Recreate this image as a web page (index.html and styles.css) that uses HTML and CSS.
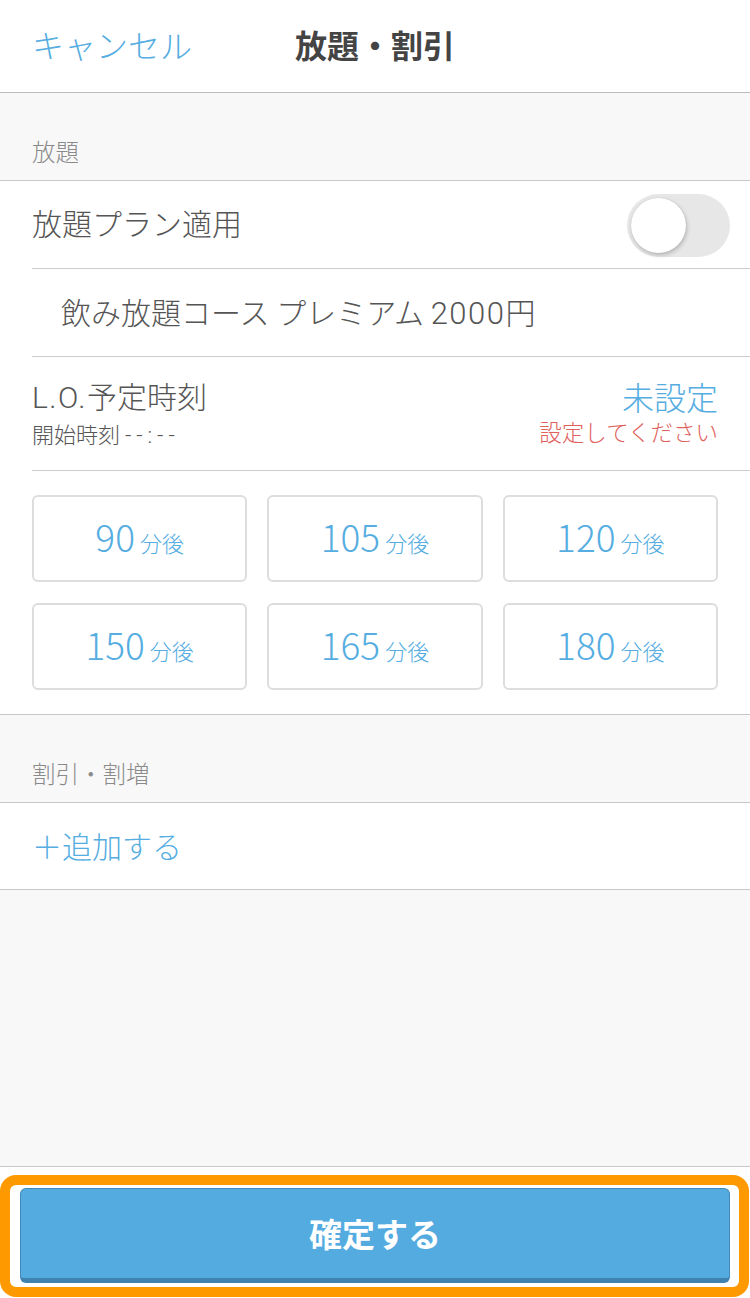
FILE: index.html
```html
<!DOCTYPE html>
<html lang="ja">
<head>
<meta charset="utf-8">
<title>放題・割引</title>
<link rel="stylesheet" href="styles.css">
</head>
<body>
<div class="page">
  <header class="header">
    <span class="cancel">キャンセル</span>
    <h1 class="title">放題・割引</h1>
  </header>

  <div class="section-head"><span>放題</span></div>
  <div class="group">
    <div class="row row-toggle">
      <span class="row-text">放題プラン適用</span>
      <span class="toggle"><span class="knob"></span></span>
    </div>
    <div class="row row-plan">
      <span class="row-text">飲み放題コース プレミアム <span class="latin price">2000</span>円</span>
    </div>
    <div class="row row-lo">
      <div class="lo-left">
        <span class="lo-title"><span class="latin lo-abbr">L.O.</span>予定時刻</span>
        <span class="lo-sub">開始時刻 <span class="latin dashes">--:--</span></span>
      </div>
      <div class="lo-right">
        <span class="lo-value">未設定</span>
        <span class="lo-warn">設定してください</span>
      </div>
    </div>
    <div class="btn-grid">
      <button class="min-btn"><span class="num">90</span><span class="unit">分後</span></button>
      <button class="min-btn"><span class="num">105</span><span class="unit">分後</span></button>
      <button class="min-btn"><span class="num">120</span><span class="unit">分後</span></button>
      <button class="min-btn"><span class="num">150</span><span class="unit">分後</span></button>
      <button class="min-btn"><span class="num">165</span><span class="unit">分後</span></button>
      <button class="min-btn"><span class="num">180</span><span class="unit">分後</span></button>
    </div>
  </div>

  <div class="section-head"><span>割引・割増</span></div>
  <div class="group">
    <div class="row row-add">
      <span class="add">＋追加する</span>
    </div>
  </div>

  <div class="filler"></div>

  <footer class="footer">
    <div class="highlight">
      <button class="confirm">確定する</button>
    </div>
  </footer>
</div>
</body>
</html>
```

FILE: styles.css
```css
* { box-sizing: border-box; }

html, body {
  margin: 0;
  padding: 0;
  background: #ffffff;
}

body {
  font-family: "Noto Sans CJK JP", "Noto Sans", sans-serif;
  font-weight: 300;
  color: #555555;
}

.latin {
  font-family: Roboto, "Liberation Sans", "Noto Sans CJK JP", sans-serif;
  font-weight: 300;
}

.page {
  width: 750px;
  height: 1298px;
  display: flex;
  flex-direction: column;
  background: #f8f8f8;
}

.header {
  height: 93px;
  flex: none;
  background: #ffffff;
  border-bottom: 1px solid #bdbdbd;
  display: flex;
  align-items: center;
  position: relative;
  padding-left: 32px;
}

.cancel {
  font-size: 32px;
  color: #55ade1;
  line-height: 1;
  margin-top: -4px;
}

.title {
  position: absolute;
  left: 0;
  right: 0;
  top: 0;
  bottom: 0;
  margin: 0;
  display: flex;
  align-items: center;
  justify-content: center;
  font-size: 32px;
  font-weight: 700;
  color: #444444;
  pointer-events: none;
  padding-bottom: 4px;
}

.section-head {
  height: 87px;
  flex: none;
  display: flex;
  align-items: flex-end;
  padding: 0 0 17px 32px;
  font-size: 23.5px;
  line-height: 23px;
  color: #8a8a8a;
}

.group {
  flex: none;
  background: #ffffff;
  border-top: 1px solid #c8c8c8;
  border-bottom: 1px solid #c8c8c8;
}

.row {
  margin-left: 32px;
  border-bottom: 1px solid #cccccc;
  display: flex;
  align-items: center;
}

.row-text {
  font-size: 30px;
  line-height: 1;
  color: #555555;
}

.row-toggle {
  height: 88px;
  justify-content: space-between;
  padding: 0 20px 0 0;
}

.row-toggle .row-text {
  margin-top: -5px;
}

.toggle {
  width: 103px;
  height: 63px;
  border-radius: 32px;
  background: #e7e7e8;
  display: flex;
  align-items: center;
  padding-left: 4px;
  margin-top: 2px;
}

.knob {
  width: 55px;
  height: 55px;
  border-radius: 50%;
  background: #ffffff;
  box-shadow: 1px 2px 4px rgba(0, 0, 0, 0.22), 0 0 1px rgba(0, 0, 0, 0.15);
}

.row-plan {
  height: 88px;
  padding-left: 29px;
}

.price {
  font-size: 31px;
  letter-spacing: 1.5px;
}

.row-lo {
  height: 114px;
  justify-content: space-between;
  padding: 0 32px 0 0;
}

.lo-left, .lo-right {
  display: flex;
  flex-direction: column;
  gap: 5px;
}

.lo-right {
  align-items: flex-end;
  margin-top: -4px;
}

.lo-title {
  font-size: 30px;
  line-height: 34px;
  color: #555555;
}

.lo-abbr {
  letter-spacing: 1.5px;
}

.lo-sub {
  font-size: 22px;
  line-height: 26px;
  color: #555555;
}

.dashes {
  letter-spacing: 5px;
}

.lo-value {
  font-size: 32px;
  line-height: 34px;
  color: #55ade1;
}

.lo-warn {
  font-size: 22.5px;
  line-height: 26px;
  color: #e0605b;
}

.btn-grid {
  display: grid;
  grid-template-columns: repeat(3, 1fr);
  column-gap: 20px;
  row-gap: 21px;
  padding: 24px 32px 24px 32px;
}

.min-btn {
  height: 87px;
  border: 2px solid #dddddd;
  border-radius: 6px;
  background: #ffffff;
  display: flex;
  align-items: baseline;
  justify-content: center;
  padding: 0;
  padding-top: 21px;
  font-family: "Noto Sans CJK JP", "Noto Sans", sans-serif;
  font-weight: 300;
  color: #55ade1;
}

.num {
  font-size: 37px;
  line-height: 36px;
}

.unit {
  font-size: 22px;
  margin-left: 5px;
}

.row-add {
  height: 86px;
  margin-left: 0;
  padding-left: 32px;
  border-bottom: none;
}

.add {
  font-size: 30px;
  color: #55ade1;
  line-height: 1;
  margin-top: -2px;
}

.filler {
  flex: 1;
  border-bottom: 1px solid #c8c8c8;
}

.footer {
  height: 131px;
  flex: none;
  background: #ffffff;
  padding-top: 8px;
}

.highlight {
  width: 749px;
  height: 122px;
  border: 10px solid #ff9900;
  border-radius: 16px;
  padding: 3px 9px 4px 10px;
  background: #ffffff;
}

.confirm {
  width: 100%;
  height: 100%;
  border: 1px solid #4388b7;
  border-bottom: 5px solid #3f82b0;
  border-radius: 6px;
  background: #54abdf;
  color: #ffffff;
  font-family: "Noto Sans CJK JP", "Noto Sans", sans-serif;
  font-size: 33px;
  font-weight: 700;
  padding: 0 0 2px 0;
}
```
